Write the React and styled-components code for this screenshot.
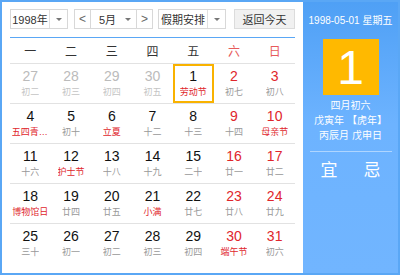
import React from 'react';
import styled, { createGlobalStyle } from 'styled-components';

const GlobalStyle = createGlobalStyle`
  body {
    margin: 0;
    font-family: "Liberation Sans", "Noto Sans CJK SC", sans-serif;
  }
`;

const Widget = styled.div`
  width: 400px;
  height: 275px;
  box-sizing: border-box;
  border: 2px solid #5aa7f5;
  display: flex;
  font-size: 12px;
  color: #333;
`;

const LeftPanel = styled.div`
  width: 301px;
  box-sizing: border-box;
  padding: 7px 8px 0 8px;
  background: #fff;
`;

const Toolbar = styled.div`
  display: flex;
  align-items: center;
  height: 20px;
  font-size: 11px;
  white-space: nowrap;
`;

const Select = styled.div`
  display: flex;
  height: 20px;
  box-sizing: border-box;
  border: 1px solid #d8d8d8;
  background: #fff;
  width: ${(p) => p.width}px;
  margin-left: ${(p) => p.gap || 0}px;
`;

const SelectText = styled.div`
  flex: 1;
  display: flex;
  align-items: center;
  justify-content: center;
  color: #333;
`;

const Arrow = styled.div`
  width: 17px;
  display: flex;
  align-items: center;
  justify-content: center;
  border-left: 1px solid ${(p) => (p.plain ? 'transparent' : '#e0e0e0')};
  &::after {
    content: '';
    border-left: 3px solid transparent;
    border-right: 3px solid transparent;
    border-top: 3px solid #777;
  }
`;

const MonthGroup = styled.div`
  display: flex;
  margin-left: 6px;
  height: 20px;
`;

const NavButton = styled.div`
  width: 17px;
  height: 20px;
  box-sizing: border-box;
  border: 1px solid #d8d8d8;
  display: flex;
  align-items: center;
  justify-content: center;
  color: #666;
  font-size: 12px;
`;

const MonthSelect = styled.div`
  width: 45px;
  height: 20px;
  box-sizing: border-box;
  border-top: 1px solid #d8d8d8;
  border-bottom: 1px solid #d8d8d8;
  display: flex;
  padding-left: 6px;
`;

const TodayButton = styled.div`
  margin-left: auto;
  width: 61px;
  height: 20px;
  box-sizing: border-box;
  border: 1px solid #dcdcdc;
  background: #f1f1f1;
  display: flex;
  align-items: center;
  justify-content: center;
  color: #333;
`;

const BlueRule = styled.div`
  margin-top: 8px;
  height: 1px;
  background: #5aa7f5;
`;

const Grid = styled.div`
  display: grid;
  grid-template-columns: repeat(7, 1fr);
`;

const WeekDay = styled.div`
  height: 25px;
  display: flex;
  align-items: center;
  justify-content: center;
  font-size: 12px;
  color: ${(p) => (p.weekend ? '#e75b5b' : '#333')};
`;

const Cell = styled.div`
  height: 40px;
  box-sizing: border-box;
  border-top: 1px solid #e2e2e2;
  display: flex;
  flex-direction: column;
  align-items: center;
  padding-top: 3px;
  box-shadow: ${(p) => (p.selected ? 'inset 0 0 0 2px #f9b200' : 'none')};
`;

const DayNum = styled.div`
  font-size: 14px;
  line-height: 18px;
  color: ${(p) => (p.faded ? '#bbb' : p.weekend ? '#e0262c' : '#111')};
`;

const Lunar = styled.div`
  font-size: 9px;
  line-height: 14px;
  max-width: 37px;
  white-space: nowrap;
  overflow: hidden;
  text-overflow: ellipsis;
  color: ${(p) => (p.faded ? '#c4c4c4' : p.fest ? '#e0262c' : '#999')};
`;

const RightPanel = styled.div`
  flex: 1;
  background: linear-gradient(#4fa0f5, #6db3ff 45%, #71b5ff);
  display: flex;
  flex-direction: column;
  align-items: center;
  color: #fff;
  white-space: nowrap;
`;

const DateLine = styled.div`
  margin-top: 11px;
  font-size: 10px;
  line-height: 16px;
`;

const BigDay = styled.div`
  margin-top: 10px;
  width: 56px;
  height: 56px;
  background: #ffb900;
  display: flex;
  align-items: center;
  justify-content: center;
  font-size: 48px;
  font-family: "Liberation Sans", sans-serif;
  color: #fff;
`;

const InfoLine = styled.div`
  font-size: 10px;
  line-height: 15px;
  margin-top: ${(p) => p.top || 0}px;
`;

const Divider = styled.div`
  width: 82px;
  height: 1px;
  background: rgba(255, 255, 255, 0.45);
  margin-top: 8px;
`;

const YiJi = styled.div`
  margin-top: 8px;
  display: flex;
  gap: 26px;
  font-size: 17px;
  line-height: 22px;
`;

const weekDays = ['一', '二', '三', '四', '五', '六', '日'];

const days = [
  [27, '初二', 'f'], [28, '初三', 'f'], [29, '初四', 'f'], [30, '初五', 'f'], [1, '劳动节', 'h', 'sel'], [2, '初七'], [3, '初八'],
  [4, '五四青年节', 'h'], [5, '初十'], [6, '立夏', 'h'], [7, '十二'], [8, '十三'], [9, '十四'], [10, '母亲节', 'h'],
  [11, '十六'], [12, '护士节', 'h'], [13, '十八'], [14, '十九'], [15, '二十'], [16, '廿一'], [17, '廿二'],
  [18, '博物馆日', 'h'], [19, '廿四'], [20, '廿五'], [21, '小满', 'h'], [22, '廿七'], [23, '廿八'], [24, '廿九'],
  [25, '三十'], [26, '初一'], [27, '初二'], [28, '初三'], [29, '初四'], [30, '端午节', 'h'], [31, '初六'],
];

export default function App() {
  return (
    <>
      <GlobalStyle />
      <Widget>
        <LeftPanel>
          <Toolbar>
            <Select width={58}>
              <SelectText>1998年</SelectText>
              <Arrow />
            </Select>
            <MonthGroup>
              <NavButton>&lt;</NavButton>
              <MonthSelect>
                <SelectText>5月</SelectText>
                <Arrow plain />
              </MonthSelect>
              <NavButton>&gt;</NavButton>
            </MonthGroup>
            <Select width={68} gap={5}>
              <SelectText>假期安排</SelectText>
              <Arrow />
            </Select>
            <TodayButton>返回今天</TodayButton>
          </Toolbar>
          <BlueRule />
          <Grid>
            {weekDays.map((w, i) => (
              <WeekDay key={w} weekend={i > 4}>{w}</WeekDay>
            ))}
            {days.map(([n, l, kind, sel], i) => {
              const weekend = i % 7 > 4;
              const faded = kind === 'f';
              return (
                <Cell key={i} selected={!!sel}>
                  <DayNum faded={faded} weekend={weekend}>{n}</DayNum>
                  <Lunar faded={faded} fest={kind === 'h'}>{l}</Lunar>
                </Cell>
              );
            })}
          </Grid>
        </LeftPanel>
        <RightPanel>
          <DateLine>1998-05-01 星期五</DateLine>
          <BigDay>1</BigDay>
          <InfoLine top={3}>四月初六</InfoLine>
          <InfoLine>戊寅年 【虎年】</InfoLine>
          <InfoLine>丙辰月 戊申日</InfoLine>
          <Divider />
          <YiJi>
            <span>宜</span>
            <span>忌</span>
          </YiJi>
        </RightPanel>
      </Widget>
    </>
  );
}
